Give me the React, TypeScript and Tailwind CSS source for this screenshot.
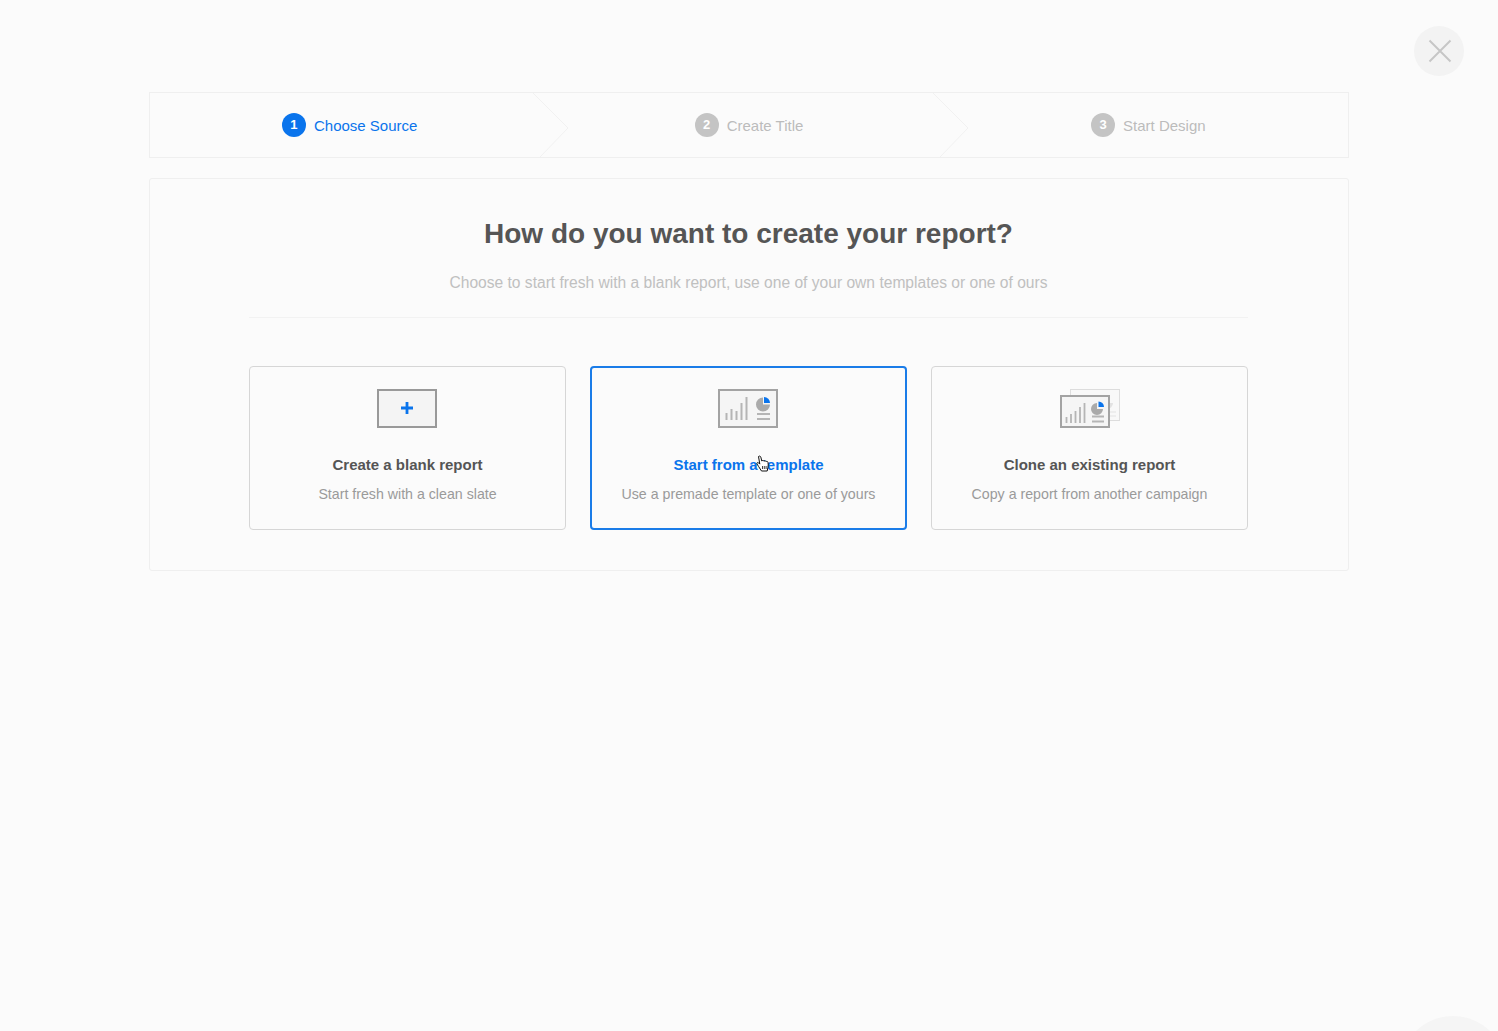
import React from 'react';

const PlusIcon = () => (
  <svg className="-ml-px" width="60" height="39" viewBox="0 0 60 39" fill="none">
    <rect x="1" y="1" width="58" height="37" fill="#f4f4f4" stroke="#999999" strokeWidth="2" />
    <path d="M30 13v12M24 19h12" stroke="#0a74ec" strokeWidth="2.800" />
  </svg>
);

const TemplateIcon = () => (
  <svg className="-ml-px" width="60" height="39" viewBox="0 0 60 39" fill="none">
    <rect x="1" y="1" width="58" height="37" fill="#f5f5f5" stroke="#a3a3a3" strokeWidth="2" />
    <path d="M8.500 24v7M13.500 20v11M18.500 22v9M23.500 14v17M28.500 8v23" stroke="#b5b5b5" strokeWidth="2" />
    <path d="M45 8.500a7 7 0 1 0 7 7h-7z" fill="#aaaaaa" />
    <path d="M46 8a6 6 0 0 1 6 6h-6z" fill="#0a74ec" />
    <path d="M39 25h13M39 30h13" stroke="#b5b5b5" strokeWidth="2" />
  </svg>
);

const CloneIcon = () => (
  <svg width="60" height="39" viewBox="0 0 60 39" fill="none">
    <rect x="10.500" y="0.500" width="49" height="31" fill="#f8f8f8" stroke="#dddddd" />
    <path d="M47 8a6 6 0 1 0 6 6h-6z" fill="#e2e2e2" />
    <path d="M50 23h6M50 27h6" stroke="#e2e2e2" />
    <rect x="1" y="7" width="48" height="31" fill="#f5f5f5" stroke="#a3a3a3" strokeWidth="2" />
    <path d="M6.500 28v6M11 25v9M15.500 22v12M20 18v16M24.500 14v20" stroke="#b5b5b5" strokeWidth="1.800" />
    <path d="M37 14a6 6 0 1 0 6 6h-6z" fill="#aaaaaa" />
    <path d="M38.500 12.500a5.500 5.500 0 0 1 5.500 5.500h-5.500z" fill="#0a74ec" />
    <path d="M32 27.500h12M32 32.500h12" stroke="#b5b5b5" strokeWidth="1.800" />
  </svg>
);

const HandCursor = () => (
  <svg width="14" height="18" viewBox="0 0 14 18">
    <path
      d="M2.500 1.500c.8-.8 2-.4 2.300.6l1 4c.3-.9 1.900-.9 2.200.2.400-.8 1.800-.7 2.100.3.500-.5 1.700-.2 1.900.7.400 1.700.3 3.700-.1 5.200l-.7 3.500H5.500L2.600 11.500 1 9c-.6-1 .6-2 1.500-1.200l1.300 1.300z"
      fill="#ffffff"
      stroke="#111111"
      strokeWidth="1"
      strokeLinejoin="round"
    />
    <path d="M6.500 11v3M8.300 11v3M10.100 11v3" stroke="#111111" strokeWidth="0.800" />
  </svg>
);

const Chevron = () => (
  <svg className="absolute right-[-20px] top-0 z-10" width="36" height="64" viewBox="0 0 36 64" fill="none">
    <path d="M0 0l35 35L7 64" stroke="#f1f1f1" strokeWidth="1" />
  </svg>
);

const steps = [
  { num: 1, label: 'Choose Source', active: true },
  { num: 2, label: 'Create Title', active: false },
  { num: 3, label: 'Start Design', active: false },
];

const options = [
  { title: 'Create a blank report', sub: 'Start fresh with a clean slate', icon: <PlusIcon />, selected: false },
  { title: 'Start from a template', sub: 'Use a premade template or one of yours', icon: <TemplateIcon />, selected: true },
  { title: 'Clone an existing report', sub: 'Copy a report from another campaign', icon: <CloneIcon />, selected: false },
];

export default function App() {
  return (
    <div className="relative h-[1031px] overflow-hidden bg-[#fbfbfb] font-['Liberation_Sans',Arial,sans-serif]">
      <button className="absolute left-[1414px] top-[26px] flex h-[50px] w-[50px] items-center justify-center rounded-full bg-[#f3f3f3]">
        <svg className="translate-x-px" width="24" height="24" viewBox="0 0 24 24" fill="none">
          <path d="M1.500 1.500l21 21M22.500 1.500l-21 21" stroke="#c6c6c6" strokeWidth="2" />
        </svg>
      </button>
      <div className="absolute left-[1400px] top-[1016px] h-[106px] w-[106px] rounded-full bg-[#f5f5f5]" />

      <div className="relative ml-[149px] w-[1200px] pt-[92px]">
        <div className="grid h-[66px] grid-cols-3 border border-[#efefef]">
          {steps.map((s, i) => (
            <div key={s.num} className="relative flex items-center justify-center gap-2">
              <span
                className={`flex h-6 w-6 items-center justify-center rounded-full text-[13px] font-bold text-white ${
                  s.active ? 'bg-[#0a74ec]' : 'bg-[#c4c4c4]'
                }`}
              >
                {s.num}
              </span>
              <span className={`mt-[2px] text-[15px] ${s.active ? 'text-[#0a74ec]' : 'text-[#bcbcbc]'}`}>{s.label}</span>
              {i < 2 && <Chevron />}
            </div>
          ))}
        </div>

        <div className="mt-5 h-[393px] rounded-[3px] border border-[#efefef] pl-[99px] pr-[100px]">
          <h1 className="mt-[37px] text-center text-[28px] leading-9 font-bold text-[#555555]">
            How do you want to create your report?
          </h1>
          <p className="mt-[19px] text-center text-[15.6px] leading-6 text-[#c0c0c0]">
            Choose to start fresh with a blank report, use one of your own templates or one of ours
          </p>
          <div className="mt-[22px] border-t border-[#f2f2f2]" />
          <div className="mt-12 grid grid-cols-3 gap-6">
            {options.map((o) => (
              <div
                key={o.title}
                className={`flex h-[164px] flex-col items-center rounded-[4px] ${
                  o.selected ? 'border-2 border-[#1a7ce8] pt-[21px]' : 'border border-[#d6d6d6] pt-[22px]'
                }`}
              >
                {o.icon}
                <h3 className={`mt-[27px] text-[15px] leading-5 font-bold ${o.selected ? 'text-[#0a74ec]' : 'text-[#555555]'}`}>
                  {o.title}
                </h3>
                <p className="mt-[9px] text-[14.2px] leading-5 text-[#9a9a9a]">{o.sub}</p>
              </div>
            ))}
          </div>
        </div>
      </div>

      <div className="absolute left-[756px] top-[455px]">
        <HandCursor />
      </div>
    </div>
  );
}
